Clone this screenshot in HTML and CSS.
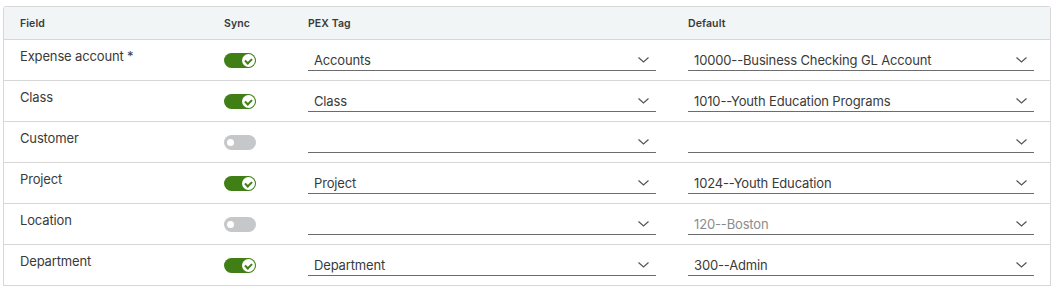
FILE: index.html
```html
<!DOCTYPE html>
<html lang="en">
<head>
    <meta charset="UTF-8">
    <title>Field mapping</title>
    <link rel="stylesheet" href="styles.css">
</head>
<body>
<table class="mapTable">
    <thead>
    <tr>
        <th class="colField">Field</th>
        <th class="colSync">Sync</th>
        <th class="colTag">PEX Tag</th>
        <th class="colDefault">Default</th>
    </tr>
    </thead>
    <tbody>
    <tr>
        <td>Expense account *</td>
        <td><span class="toggle on"></span></td>
        <td><div class="select"><span>Accounts</span><svg class="chev" width="11" height="6" viewBox="0 0 11 6"><polyline points="0.5,0.5 5.5,5 10.5,0.5"/></svg></div></td>
        <td><div class="select"><span>10000--Business Checking GL Account</span><svg class="chev" width="11" height="6" viewBox="0 0 11 6"><polyline points="0.5,0.5 5.5,5 10.5,0.5"/></svg></div></td>
    </tr>
    <tr>
        <td>Class</td>
        <td><span class="toggle on"></span></td>
        <td><div class="select"><span>Class</span><svg class="chev" width="11" height="6" viewBox="0 0 11 6"><polyline points="0.5,0.5 5.5,5 10.5,0.5"/></svg></div></td>
        <td><div class="select"><span>1010--Youth Education Programs</span><svg class="chev" width="11" height="6" viewBox="0 0 11 6"><polyline points="0.5,0.5 5.5,5 10.5,0.5"/></svg></div></td>
    </tr>
    <tr>
        <td>Customer</td>
        <td><span class="toggle"></span></td>
        <td><div class="select"><span></span><svg class="chev" width="11" height="6" viewBox="0 0 11 6"><polyline points="0.5,0.5 5.5,5 10.5,0.5"/></svg></div></td>
        <td><div class="select"><span></span><svg class="chev" width="11" height="6" viewBox="0 0 11 6"><polyline points="0.5,0.5 5.5,5 10.5,0.5"/></svg></div></td>
    </tr>
    <tr>
        <td>Project</td>
        <td><span class="toggle on"></span></td>
        <td><div class="select"><span>Project</span><svg class="chev" width="11" height="6" viewBox="0 0 11 6"><polyline points="0.5,0.5 5.5,5 10.5,0.5"/></svg></div></td>
        <td><div class="select"><span>1024--Youth Education</span><svg class="chev" width="11" height="6" viewBox="0 0 11 6"><polyline points="0.5,0.5 5.5,5 10.5,0.5"/></svg></div></td>
    </tr>
    <tr>
        <td>Location</td>
        <td><span class="toggle"></span></td>
        <td><div class="select"><span></span><svg class="chev" width="11" height="6" viewBox="0 0 11 6"><polyline points="0.5,0.5 5.5,5 10.5,0.5"/></svg></div></td>
        <td><div class="select muted"><span>120--Boston</span><svg class="chev" width="11" height="6" viewBox="0 0 11 6"><polyline points="0.5,0.5 5.5,5 10.5,0.5"/></svg></div></td>
    </tr>
    <tr>
        <td>Department</td>
        <td><span class="toggle on"></span></td>
        <td><div class="select"><span>Department</span><svg class="chev" width="11" height="6" viewBox="0 0 11 6"><polyline points="0.5,0.5 5.5,5 10.5,0.5"/></svg></div></td>
        <td><div class="select"><span>300--Admin</span><svg class="chev" width="11" height="6" viewBox="0 0 11 6"><polyline points="0.5,0.5 5.5,5 10.5,0.5"/></svg></div></td>
    </tr>
    </tbody>
</table>
</body>
</html>
```

FILE: styles.css
```css
body {
    margin: 0;
    padding: 6px 7px 0 3px;
    background-color: #FFF;
    font-family: Inter, "Noto Sans", sans-serif;
    color: #3A3A3A;
}
.mapTable {
    width: 1048px;
    border-collapse: separate;
    border-spacing: 0;
    border: 1px solid #D7D7D7;
    border-bottom: none;
    border-radius: 3px 3px 0 0;
    table-layout: fixed;
}
.mapTable th {
    background-color: #F1F5F6;
    font-size: 10.5px;
    font-weight: 600;
    text-align: left;
    height: 32px;
    padding: 0 16px;
    border-bottom: 1px solid #D7D7D7;
    color: #3A3A3A;
    letter-spacing: 0.1px;
}
.colField { width: 172px; }
.colSync { width: 52px; }
.colTag { width: 348px; }
.mapTable td {
    height: 40px;
    padding: 0 16px;
    border-bottom: 1px solid #D7D7D7;
    vertical-align: top;
    font-size: 13px;
    letter-spacing: -0.15px;
}
.mapTable td:first-child {
    padding-top: 7px;
    height: 33px;
    line-height: 18px;
}
.toggle {
    display: block;
    margin-top: 13px;
    width: 32px;
    height: 15px;
    border-radius: 8px;
    background-color: #C5C7C8;
    position: relative;
}
.toggle::after {
    content: "";
    position: absolute;
    left: 3px;
    top: 4px;
    width: 7px;
    height: 7px;
    border-radius: 50%;
    background-color: #FFF;
}
.toggle.on {
    background-color: #3F7F16;
}
.toggle.on::after {
    left: auto;
    right: 1px;
    top: 1px;
    width: 13px;
    height: 13px;
}
.toggle.on::before {
    content: "";
    position: absolute;
    right: 5px;
    top: 4px;
    width: 3px;
    height: 5px;
    border-right: 2px solid #3F7F16;
    border-bottom: 2px solid #3F7F16;
    transform: rotate(45deg);
    z-index: 1;
}
.select {
    display: flex;
    align-items: center;
    justify-content: space-between;
    margin-top: 10px;
    height: 20px;
    padding: 0 7px 0 6px;
    border-bottom: 1px solid #6C6C6C;
    font-size: 13px;
    color: #3A3A3A;
}
.select.muted {
    color: #8C8C8C;
}
.chev {
    display: block;
    fill: none;
    stroke: #555;
    stroke-width: 1.2;
}
```
